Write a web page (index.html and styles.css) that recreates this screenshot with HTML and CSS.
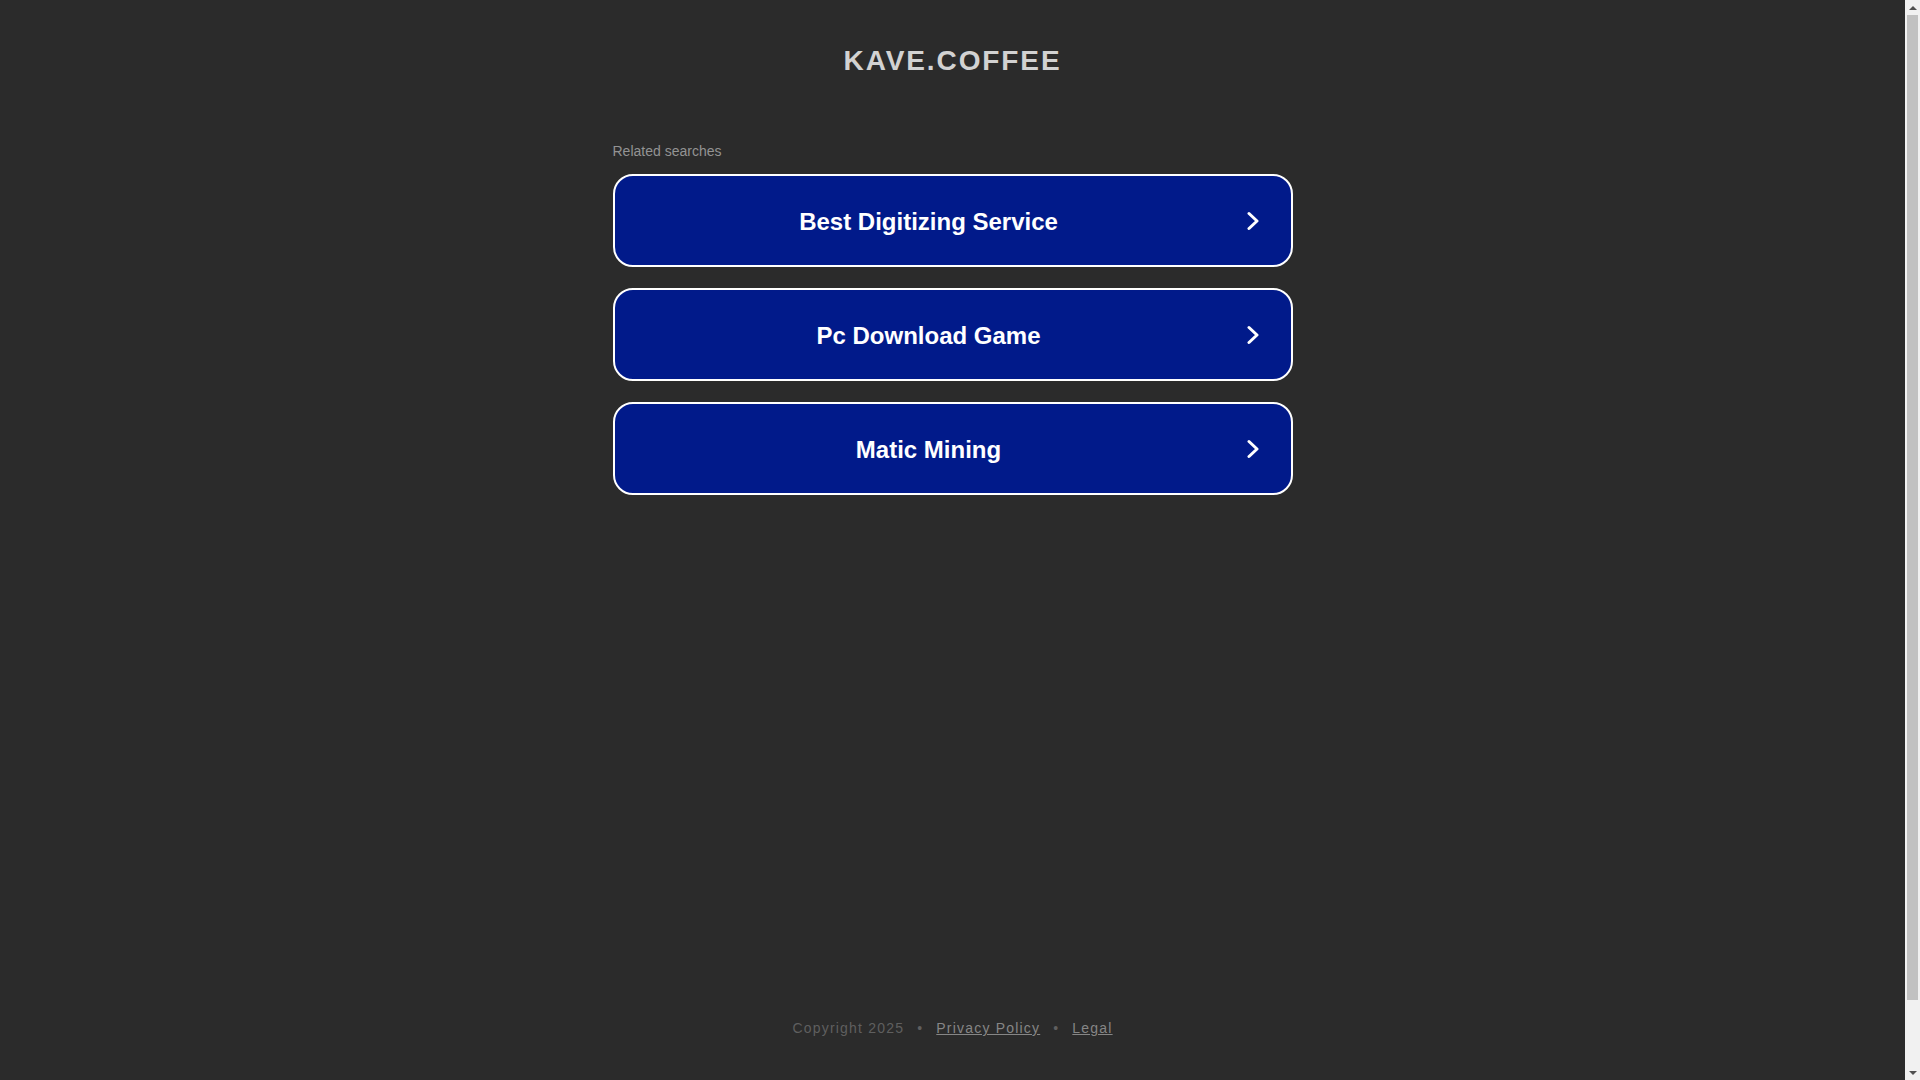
FILE: index.html
```html
<!DOCTYPE html>
<html lang="en">
<head>
<meta charset="utf-8">
<title>kave.coffee</title>
<link rel="stylesheet" href="styles.css">
</head>
<body>
<div class="page">
  <header class="header">
    <h1 class="title">KAVE.COFFEE</h1>
  </header>
  <main class="main">
    <div class="related">Related searches</div>
    <ul class="list">
      <li><a class="btn" href="#"><span class="btn-text">Best Digitizing Service</span><svg class="chev" width="12" height="20" viewBox="0 0 12 20"><polyline points="2,2.5 10,10 2,17.5" fill="none" stroke="#fff" stroke-width="3" stroke-linecap="round" stroke-linejoin="round"/></svg></a></li>
      <li><a class="btn" href="#"><span class="btn-text">Pc Download Game</span><svg class="chev" width="12" height="20" viewBox="0 0 12 20"><polyline points="2,2.5 10,10 2,17.5" fill="none" stroke="#fff" stroke-width="3" stroke-linecap="round" stroke-linejoin="round"/></svg></a></li>
      <li><a class="btn" href="#"><span class="btn-text">Matic Mining</span><svg class="chev" width="12" height="20" viewBox="0 0 12 20"><polyline points="2,2.5 10,10 2,17.5" fill="none" stroke="#fff" stroke-width="3" stroke-linecap="round" stroke-linejoin="round"/></svg></a></li>
    </ul>
  </main>
  <footer class="footer">
    <span class="copy">Copyright 2025</span><span class="sep">•</span><a class="flink" href="#">Privacy Policy</a><span class="sep">•</span><a class="flink" href="#">Legal</a>
  </footer>
</div>
<div class="scrollbar" aria-hidden="true">
  <div class="sb-arrow sb-up"></div>
  <div class="sb-track"><div class="sb-thumb"></div></div>
  <div class="sb-arrow sb-down"></div>
</div>
</body>
</html>
```

FILE: styles.css
```css
html, body {
  margin: 0;
  padding: 0;
  background: #2b2b2b;
  overflow: hidden;
}
body {
  font-family: "Liberation Sans", Arial, sans-serif;
}
.page {
  width: calc(100vw - 15px);
  min-height: 100vh;
  display: flex;
  flex-direction: column;
  align-items: center;
}
.header {
  padding-top: 44px;
}
.title {
  margin: 0;
  font-size: 28px;
  line-height: 34px;
  font-weight: bold;
  letter-spacing: 1.9px;
  color: #d2d2d2;
  text-align: center;
}
.main {
  width: 680px;
  margin-top: 64px;
}
.related {
  font-size: 14px;
  line-height: 18px;
  color: #939393;
  margin-bottom: 14px;
}
.list {
  list-style: none;
  margin: 0;
  padding: 0;
  display: flex;
  flex-direction: column;
  gap: 21px;
}
.btn {
  display: flex;
  align-items: center;
  height: 89px;
  border: 2px solid #ffffff;
  border-radius: 20px;
  background: #011a8a;
  color: #ffffff;
  text-decoration: none;
}
.btn-text {
  flex: 1;
  text-align: center;
  font-size: 24px;
  font-weight: bold;
  line-height: 30px;
  padding-top: 2px;
}
.chev {
  display: block;
  margin-left: 4px;
  margin-right: 32px;
}
.footer {
  margin-top: auto;
  padding-bottom: 43px;
  font-size: 14px;
  line-height: 18px;
  letter-spacing: 1.2px;
  color: #5f5f5f;
}
.sep {
  margin: 0 13px;
  color: #5f5f5f;
}
.flink {
  color: #868686;
  text-decoration: underline;
}
.scrollbar {
  position: fixed;
  top: 0;
  right: 0;
  width: 15px;
  height: 100vh;
  background: #f1f1f1;
  display: flex;
  flex-direction: column;
}
.sb-arrow {
  height: 15px;
  display: flex;
  align-items: center;
  justify-content: center;
}
.sb-up::before,
.sb-down::before {
  content: "";
  width: 0;
  height: 0;
  border-left: 4px solid transparent;
  border-right: 4px solid transparent;
}
.sb-up::before {
  border-bottom: 4px solid #505050;
}
.sb-down::before {
  border-top: 4px solid #505050;
}
.sb-track {
  flex: 1;
  padding: 0 2px;
}
.sb-thumb {
  height: 985px;
  background: #c1c1c1;
}
```
